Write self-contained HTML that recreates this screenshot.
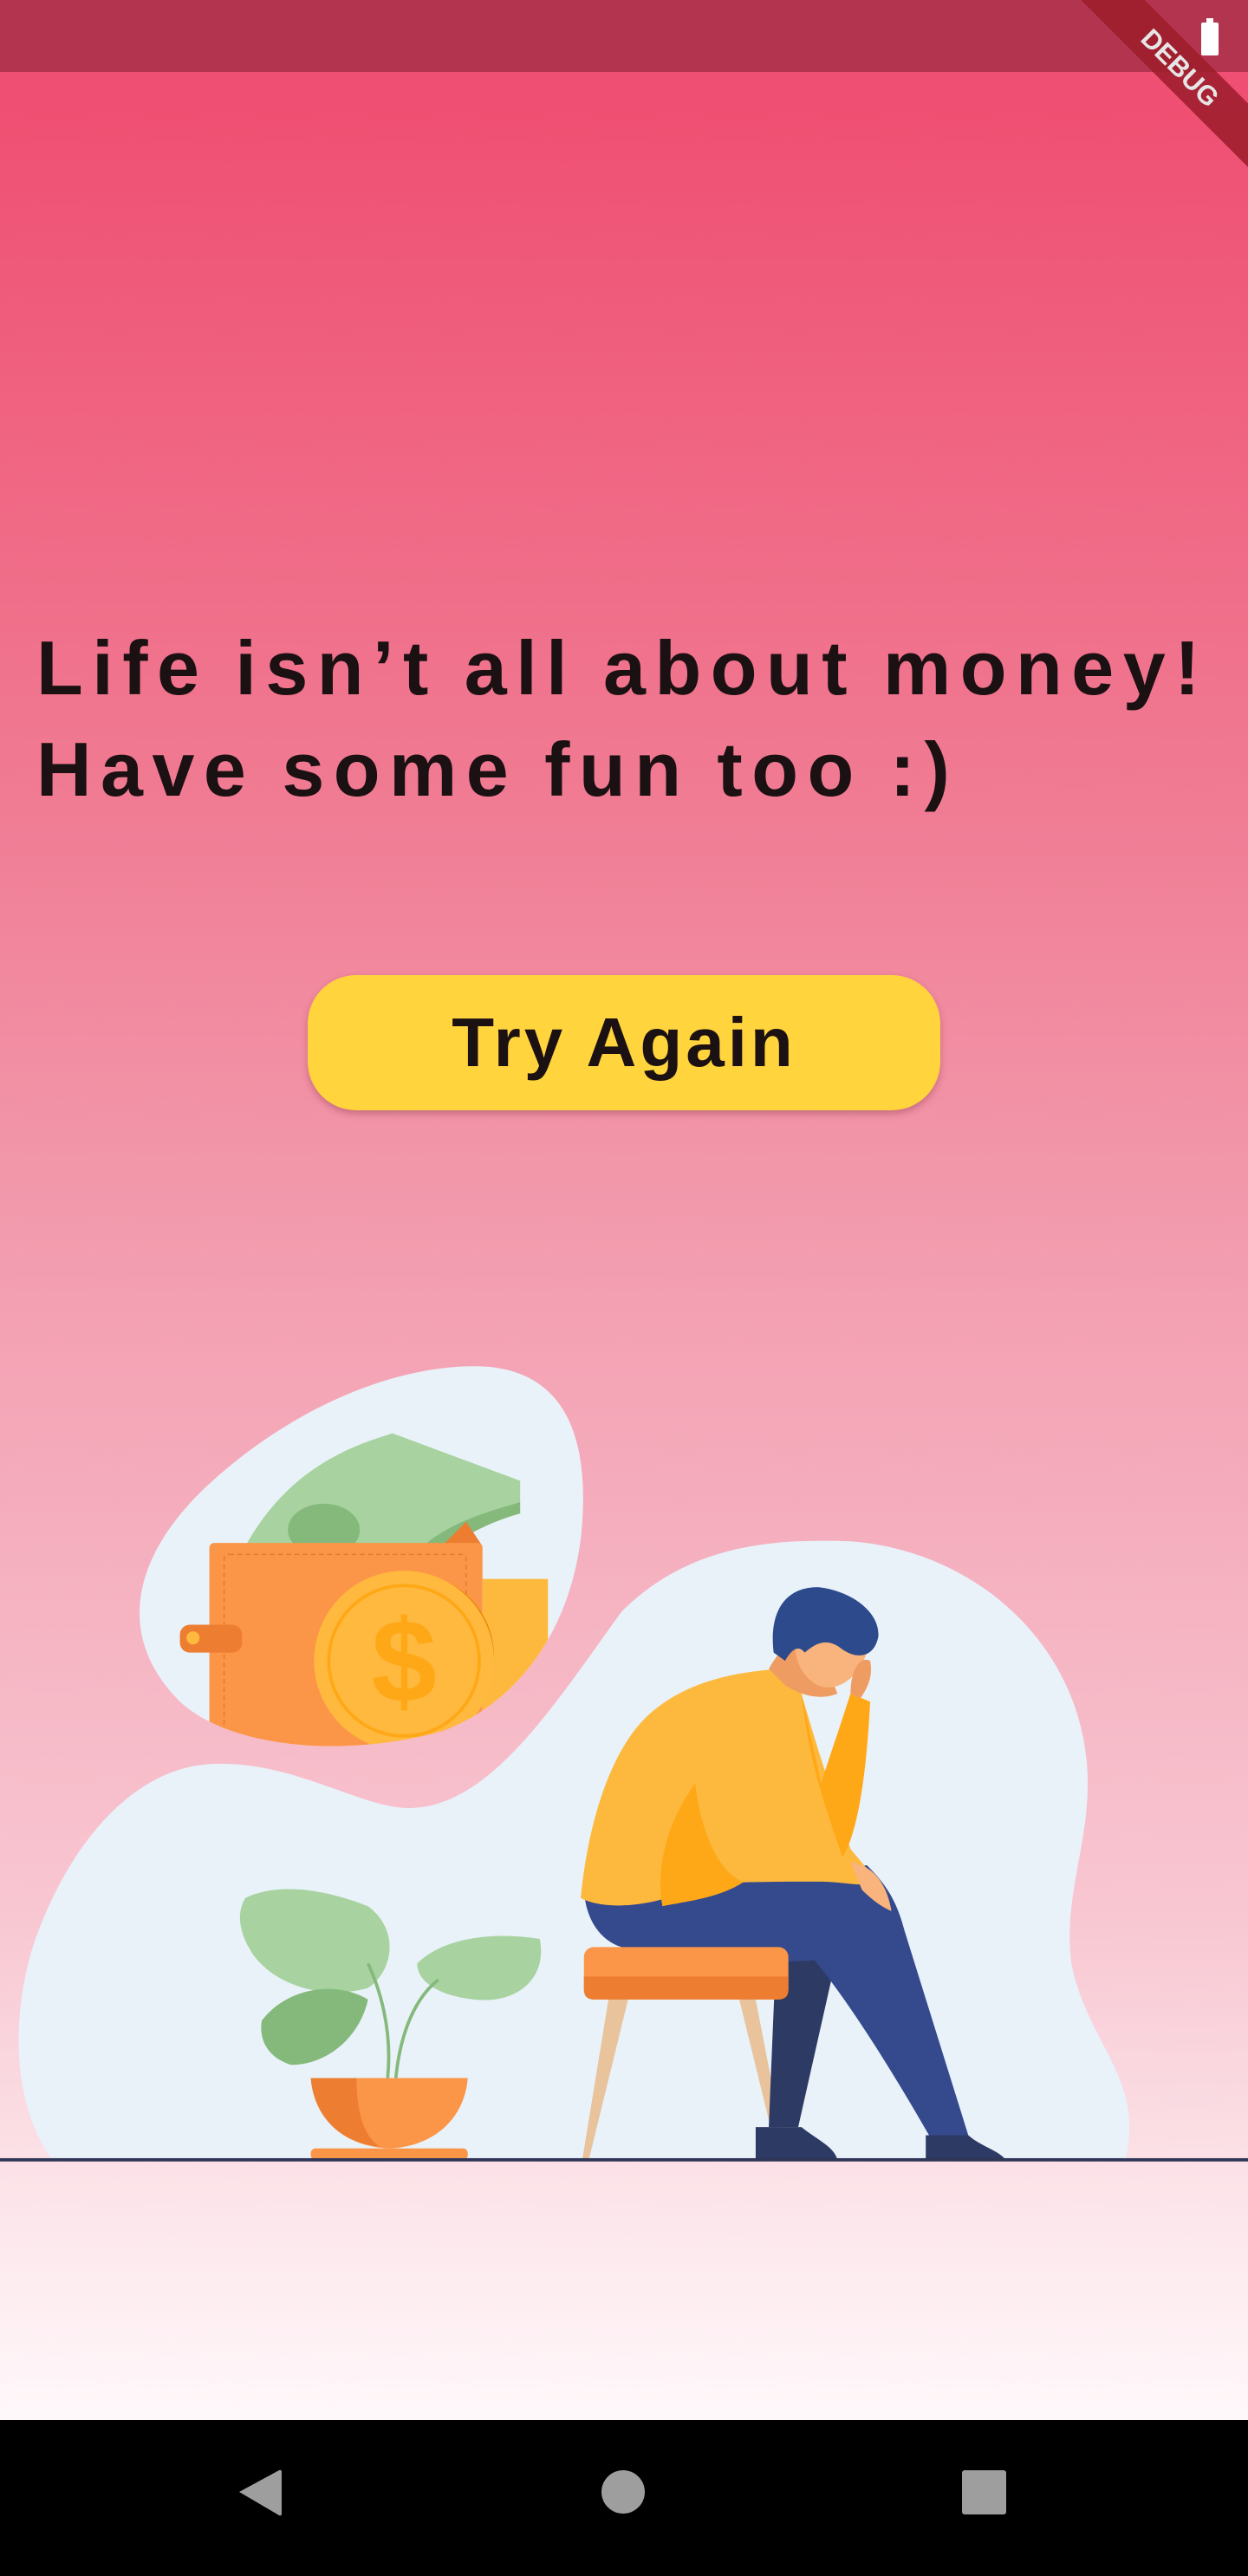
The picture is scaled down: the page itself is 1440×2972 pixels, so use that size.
<!DOCTYPE html>
<html><head><meta charset="utf-8">
<style>
html,body{margin:0;padding:0;}
body{width:1440px;height:2960px;position:relative;overflow:hidden;
background:linear-gradient(to bottom,#ef4f72 0px,#ef4f72 120px,#f07a92 900px,#f3a0b2 1500px,#f8c6d1 2200px,#fce6eb 2550px,#fff8fa 2790px);font-family:"Liberation Sans",sans-serif;}
.status{position:absolute;left:0;top:0;width:1440px;height:83px;background:#b3344f;}
.title{position:absolute;left:42px;top:712px;font-size:88px;font-weight:bold;line-height:117px;letter-spacing:10.5px;word-spacing:-4px;color:#1b1012;white-space:nowrap;}
.btn{position:absolute;left:355px;top:1125px;width:730px;height:156px;border-radius:56px;background:#ffd43d;box-shadow:0 4px 8px rgba(120,40,60,.35);display:flex;align-items:center;justify-content:center;font-size:80px;font-weight:bold;letter-spacing:4px;color:#1b1012;}
.nav{position:absolute;left:0;top:2792px;width:1440px;height:180px;background:#000;}
svg.ill{position:absolute;left:0;top:0;}
</style></head><body>
<div class="status"></div>
<svg style="position:absolute;left:0;top:0" width="1440" height="240">
  <g transform="translate(1362,78) rotate(45)">
    <rect x="-200" y="-26" width="400" height="52" fill="#9e1e2c" opacity=".88"/>
    <text x="0" y="11" text-anchor="middle" font-family="Liberation Sans" font-weight="bold" font-size="31" fill="#e6e6e6">DEBUG</text>
  </g>
  <rect x="1386" y="26" width="20" height="38" rx="2" fill="#fff"/>
  <rect x="1392" y="21" width="8" height="6" fill="#fff"/>
</svg>
<div class="title">Life isn’t all about money!<br>Have some fun too :)</div>
<div class="btn">Try Again</div>
<svg class="ill" width="1440" height="2960" viewBox="0 0 763 1568" preserveAspectRatio="none">
  <defs><clipPath id="sb"><path d="M110,1040 C70,1000 80,950 130,905 C180,860 240,835 290,835 C340,835 360,870 356,930 C352,990 320,1040 270,1058 C210,1075 140,1068 110,1040 Z"/></clipPath></defs>
  <path d="M32,1320 C10,1290 5,1240 20,1190 C40,1130 80,1080 130,1078 C180,1076 220,1105 250,1105 C300,1105 340,1040 380,985 C420,945 470,940 520,942 C600,948 665,1010 665,1090 C665,1130 650,1160 655,1200 C665,1250 700,1270 688,1320 Z" fill="#e9f2f9"/>
  <path d="M110,1040 C70,1000 80,950 130,905 C180,860 240,835 290,835 C340,835 360,870 356,930 C352,990 320,1040 270,1058 C210,1075 140,1068 110,1040 Z" fill="#e9f2f9"/>
  <g clip-path="url(#sb)">
    <path d="M150,945 C175,900 210,885 240,876 L318,905 L318,925 C290,932 270,940 255,948 Z" fill="#a8d3a0"/>
    <path d="M255,948 C275,930 295,925 318,918 L318,925 C300,930 285,938 270,948 Z" fill="#85b97c"/>
    <ellipse cx="198" cy="935" rx="22" ry="16" fill="#85b97c"/>
    <path d="M270,945 L285,930 L295,945 Z" fill="#ed7d31"/>
    <rect x="128" y="943" width="167" height="130" rx="3" fill="#fb9648"/>
    <rect x="137" y="950" width="148" height="120" rx="3" fill="none" stroke="#e57a33" stroke-width="0.8" stroke-dasharray="3,2"/>
    <rect x="295" y="965" width="40" height="100" fill="#fdb83e"/>
    <circle cx="252" cy="1012" r="50" fill="#e88a0a"/>
    <circle cx="247" cy="1015" r="55" fill="#ffb93e"/>
    <circle cx="247" cy="1015" r="46" fill="none" stroke="#ffa817" stroke-width="2"/>
    <text x="247" y="1040" text-anchor="middle" font-family="Liberation Sans" font-weight="bold" font-size="72" fill="#ffa817">$</text>
  </g>
  <rect x="110" y="993" width="38" height="17" rx="6" fill="#ed7d31"/>
  <circle cx="118" cy="1001" r="4" fill="#ffb93e"/>
  <g fill="#a8d3a0">
    <path d="M150,1160 C170,1150 200,1155 225,1165 C245,1180 240,1205 225,1215 C200,1222 170,1215 155,1195 C145,1180 145,1168 150,1160 Z"/>
    <path d="M255,1200 C270,1185 300,1180 330,1185 C335,1210 315,1225 290,1222 C270,1220 255,1212 255,1200 Z"/>
    <path d="M160,1235 C175,1215 205,1210 225,1222 C220,1245 200,1262 178,1262 C165,1258 158,1248 160,1235 Z" fill="#85b97c"/>
  </g>
  <path d="M237,1270 C240,1240 232,1215 225,1200 M242,1270 C245,1240 255,1220 268,1210" stroke="#85b97c" stroke-width="2" fill="none"/>
  <path d="M190,1270 L286,1270 C284,1295 265,1312 238,1313 C210,1312 192,1295 190,1270 Z" fill="#fb9648"/>
  <path d="M190,1270 L218,1270 C218,1290 222,1305 232,1312 C210,1310 192,1295 190,1270 Z" fill="#ed7d31"/>
  <rect x="190" y="1313" width="96" height="7" rx="3" fill="#fb9648"/>
  <path d="M372,1222 L384,1222 L360,1320 L356,1320 Z" fill="#e8c39c"/>
  <path d="M452,1222 L462,1222 L481,1320 L476,1320 Z" fill="#e8c39c"/>
  <path d="M475,1180 L515,1180 L488,1300 L470,1300 Z" fill="#2d3a63"/>
  <path d="M462,1300 L490,1300 C500,1308 510,1312 512,1320 L462,1320 Z" fill="#2d3a63"/>
  <path d="M357,1152 L530,1140 C540,1150 548,1160 553,1180 L592,1305 L568,1305 C545,1265 520,1225 498,1198 C470,1200 420,1200 380,1190 C365,1185 357,1170 357,1152 Z" fill="#35498d"/>
  <path d="M566,1305 L592,1305 C600,1312 610,1314 615,1320 L566,1320 Z" fill="#2d3a63"/>
  <rect x="357" y="1190" width="125" height="32" rx="6" fill="#fb9648"/>
  <path d="M357,1208 L482,1208 L482,1216 Q482,1222 476,1222 L363,1222 Q357,1222 357,1216 Z" fill="#ed7d31"/>
  <path d="M355,1160 C360,1110 375,1065 400,1045 C425,1025 455,1022 475,1020 L490,1035 C500,1070 510,1100 520,1130 L535,1148 C530,1155 520,1150 500,1150 C460,1150 430,1150 420,1155 C400,1165 370,1168 355,1160 Z" fill="#fdb93e"/>
  <path d="M425,1090 C430,1130 445,1148 455,1150 C440,1160 420,1162 405,1165 C400,1140 410,1110 425,1090 Z" fill="#ffa817"/>
  <path d="M490,1035 C495,1080 505,1105 515,1135 C525,1120 530,1080 532,1040 L520,1035 C512,1060 505,1080 502,1090 Z" fill="#ffa817"/>
  <path d="M520,1138 C533,1140 542,1150 545,1168 C538,1165 532,1160 527,1155 Z" fill="#f9b37c"/>
  <path d="M470,1020 C478,1005 488,1000 500,1005 L512,1035 C500,1040 488,1035 480,1030 Z" fill="#ef9c62"/>
  <path d="M487,1000 C500,985 525,990 530,1010 C525,1025 512,1035 500,1030 C490,1025 484,1012 487,1000 Z" fill="#f9b37c"/>
  <path d="M520,1035 C520,1020 526,1012 532,1015 C534,1025 530,1032 526,1038 Z" fill="#ef9c62"/>
  <path d="M473,1010 C470,985 480,970 500,970 C520,972 538,985 537,1000 C535,1012 525,1015 515,1008 C505,1000 498,1005 492,1010 C488,1005 484,1008 480,1015 Z" fill="#2c4a8c"/>
  <rect x="0" y="1319" width="763" height="2" fill="#2e3556"/>
</svg>
<div class="nav">
  <svg width="1440" height="170">
    <path d="M276,83 L322,58 Q325,57 325,60 L325,108 Q325,111 322,110 Z" fill="#9e9e9e"/>
    <circle cx="719" cy="83" r="25" fill="#9e9e9e"/>
    <rect x="1110" y="58" width="51" height="51" rx="3" fill="#9e9e9e"/>
  </svg>
</div>
</body></html>
